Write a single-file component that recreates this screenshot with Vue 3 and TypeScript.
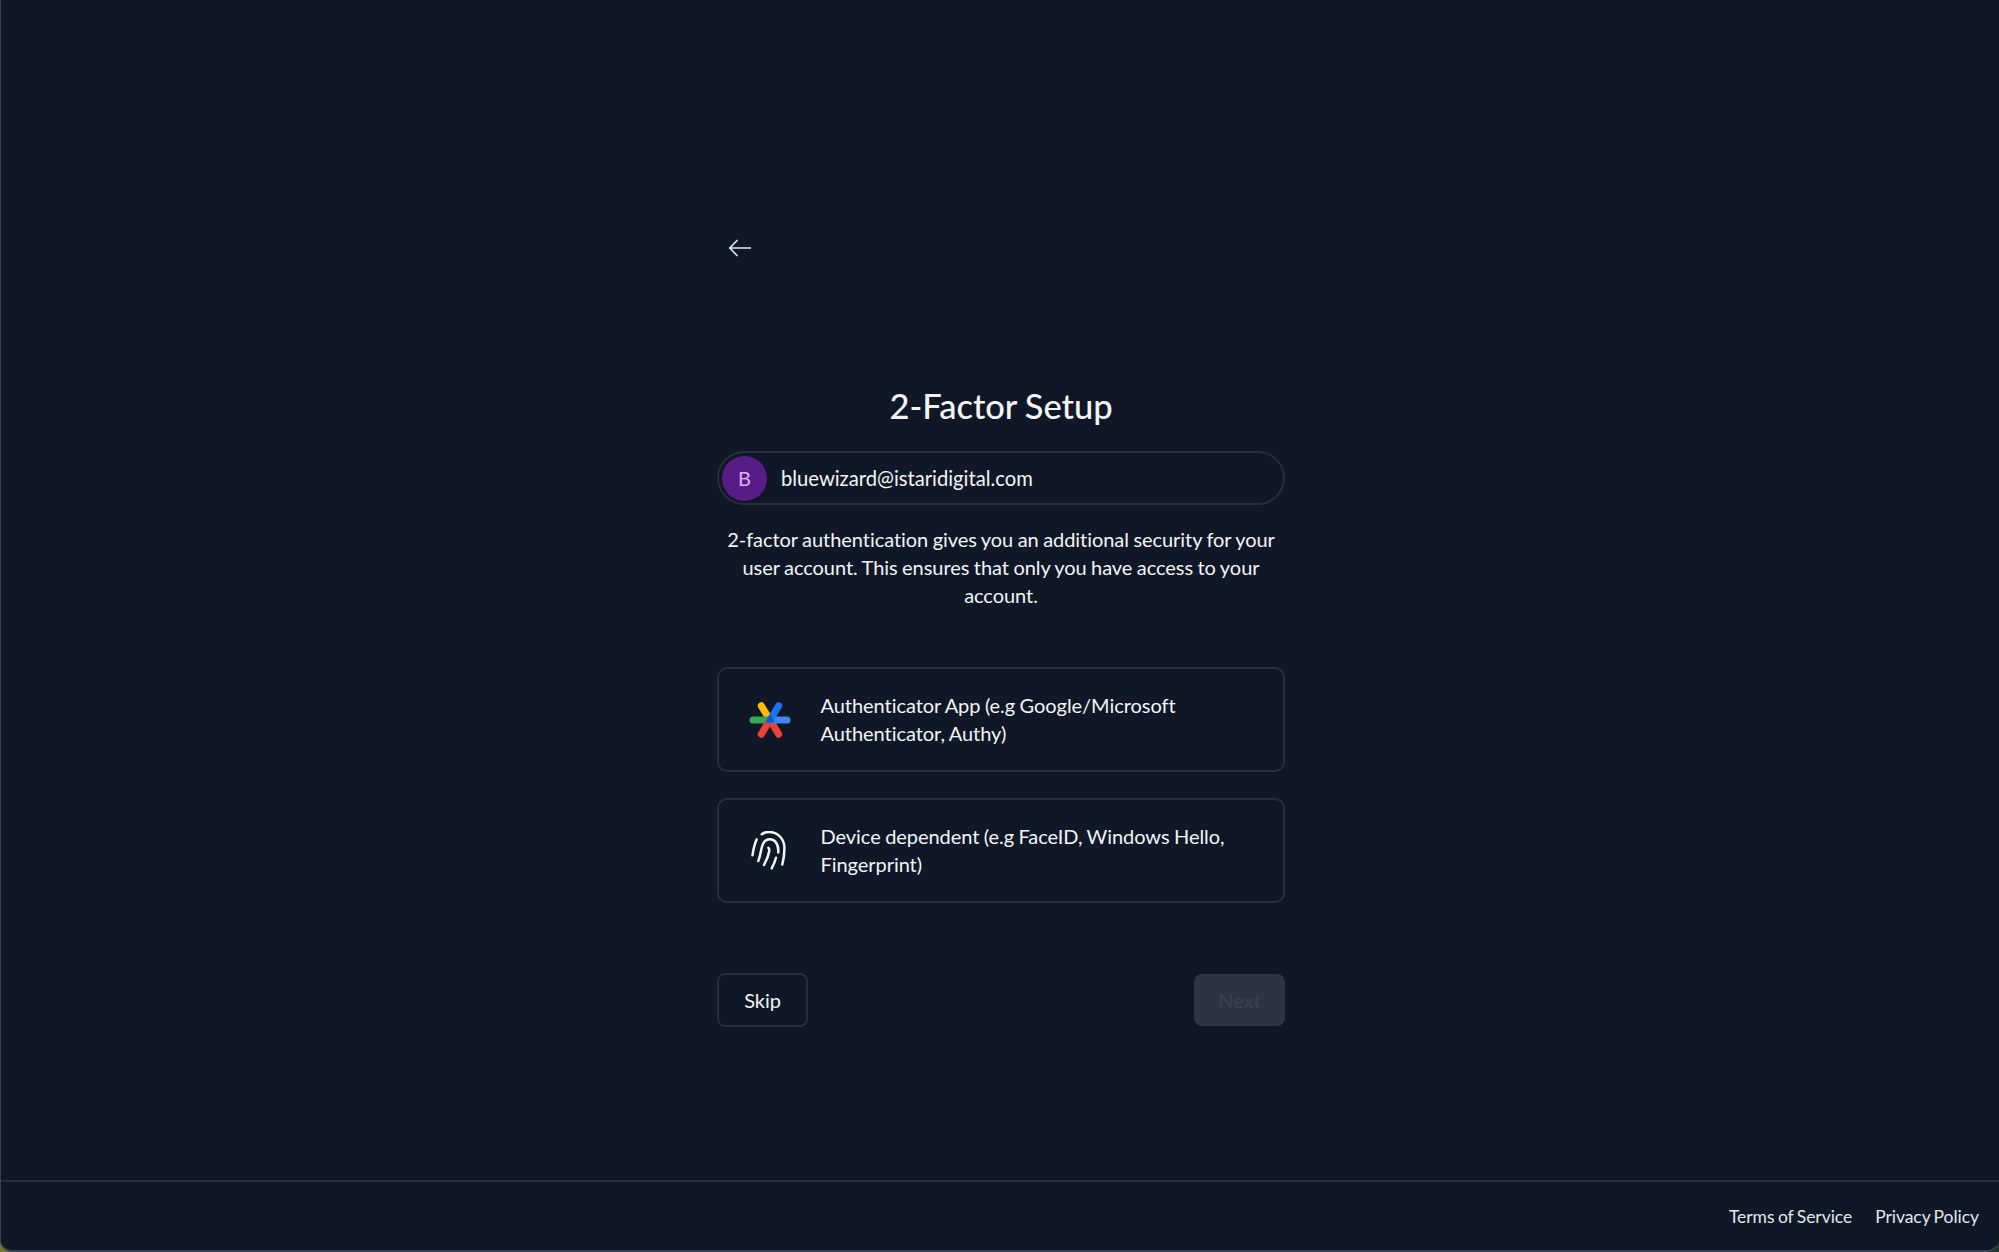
<script setup lang="ts">
const options = [
  { id: 'app', label: 'Authenticator App (e.g Google/Microsoft Authenticator, Authy)' },
  { id: 'device', label: 'Device dependent (e.g FaceID, Windows Hello, Fingerprint)' },
]
</script>

<template>
  <div class="frame">
    <main class="page">
      <div class="column">
        <button class="back" type="button" aria-label="Back">
          <svg width="24" height="20" viewBox="0 0 24 20" fill="none" stroke="#e5e7eb" stroke-width="1.6">
            <path d="M23 10H2M9.5 2 1.8 10l7.700 8" />
          </svg>
        </button>

        <h1>2-Factor Setup</h1>

        <div class="user">
          <span class="avatar">B</span>
          <span class="email">bluewizard@istaridigital.com</span>
        </div>

        <p class="intro">
          2-factor authentication gives you an additional security for your user account. This ensures that only you
          have access to your account.
        </p>

        <div class="options">
          <button v-for="opt in options" :key="opt.id" class="option" type="button">
            <span class="icon">
              <svg v-if="opt.id === 'app'" width="42" height="40" viewBox="0 0 42 40" fill="none" stroke-width="7" stroke-linecap="round">
                <path d="M12.300 5.800 21 20" stroke="#fbbc04" />
                <path d="M4 20h17" stroke="#34a853" />
                <path d="M12.300 34.200 21 20" stroke="#ea4335" />
                <path d="M29.700 34.200 21 20" stroke="#ea4335" />
                <path d="M21 20h17" stroke="#4285f4" />
                <path d="M29.700 5.800 21 20" stroke="#1a73e8" />
                <path d="M21 14.500 16.200 22.500h9.600z" fill="#185abc" stroke="none" />
              </svg>
              <svg v-else width="40" height="40" viewBox="0 0 40 40" fill="none" stroke="#f3f4f6" stroke-width="2.500" stroke-linecap="round">
                <path d="M11.700 3.300C14 1.600 17 .8 20 1c8.500.6 14.300 7.500 14.400 15.500.1 6-.5 11-2.100 17" />
                <path d="M6.700 8.300C4.600 13 3.300 18.500 2.500 24.300" />
                <path d="M8.300 30c1.700-4.300 2.300-8.500 3.400-13.300C13 11 16 8.300 20 8.300c5 0 8.300 5 8.300 11 0 .8 0 1.500-.1 2.200" />
                <path d="M14 34c2.800-5 4.600-10 5.300-14 .3-1.500-.2-2.600-1-3.300" />
                <path d="M21.700 37.300c1.800-3.300 3.300-6.800 4.300-10.600" />
              </svg>
            </span>
            <span class="label">{{ opt.label }}</span>
          </button>
        </div>

        <div class="actions">
          <button class="skip" type="button">Skip</button>
          <button class="next" type="button" disabled>Next</button>
        </div>
      </div>
    </main>

    <footer class="footer">
      <a href="#">Terms of Service</a>
      <a href="#">Privacy Policy</a>
    </footer>
  </div>
</template>

<style scoped>
.frame {
  box-sizing: border-box;
  display: flex;
  flex-direction: column;
  height: 1252px;
  border-left: 1px solid #374151;
  border-bottom: 2px solid #374151;
  border-bottom-left-radius: 12px;
  border-bottom-right-radius: 12px;
  background: #101828;
  color: #f3f4f6;
  font-family: Lato, 'Liberation Sans', sans-serif;
  word-spacing: -0.6px;
  letter-spacing: -0.05px;
}

.page {
  flex: 1;
  display: flex;
  justify-content: center;
  padding-left: 2px;
}

.column {
  width: 568px;
  padding-top: 233px;
}

button {
  font-family: inherit;
  word-spacing: inherit;
  letter-spacing: inherit;
}

.back {
  display: block;
  width: 34px;
  height: 32px;
  margin-left: 6px;
  padding: 0;
  border: 0;
  background: none;
  cursor: pointer;
}

h1 {
  margin: 119px 0 0;
  font-size: 34.500px;
  line-height: 44px;
  font-weight: 500;
  text-align: center;
  color: #f3f4f6;
}

.user {
  display: flex;
  align-items: center;
  gap: 14px;
  height: 54px;
  margin-top: 23px;
  padding-left: 3px;
  box-sizing: border-box;
  border: 2px solid #272e3c;
  border-radius: 27px;
}

.avatar {
  display: flex;
  align-items: center;
  justify-content: center;
  width: 45px;
  height: 45px;
  border-radius: 50%;
  background: #581c87;
  color: #d8b4fe;
  font-size: 20px;
}

.email {
  font-size: 20.200px;
  letter-spacing: 0;
  color: #f3f4f6;
}

.intro {
  margin: 20px 0 0;
  font-size: 20px;
  line-height: 28px;
  text-align: center;
  color: #f3f4f6;
}

.options {
  display: flex;
  flex-direction: column;
  gap: 26px;
  margin-top: 58px;
}

.option {
  display: flex;
  align-items: center;
  gap: 29.500px;
  height: 105px;
  padding: 0 29px;
  box-sizing: border-box;
  border: 2px solid #272e3c;
  border-radius: 10px;
  background: #101828;
  color: #f3f4f6;
  text-align: left;
  cursor: pointer;
}

.icon {
  display: flex;
  flex: none;
  justify-content: center;
  width: 43px;
}

.label {
  font-size: 20px;
  line-height: 28px;
  transform: translateY(-1px);
}

.actions {
  display: flex;
  align-items: center;
  justify-content: space-between;
  margin-top: 70px;
}

.skip {
  width: 91px;
  height: 54px;
  border: 2px solid #272e3c;
  border-radius: 8px;
  background: none;
  color: #f3f4f6;
  font-size: 20px;
  cursor: pointer;
}

.next {
  width: 91px;
  height: 52px;
  border: 0;
  border-radius: 8px;
  background: #2d3441;
  color: #374151;
  font-size: 20px;
}

.footer {
  display: flex;
  justify-content: flex-end;
  align-items: center;
  gap: 23px;
  height: 70px;
  padding: 0 20px 0 0;
  box-sizing: border-box;
  border-top: 2px solid #272e3c;
  font-size: 17.500px;
  word-spacing: -1px;
}

.footer a {
  color: #e5e7eb;
  text-decoration: none;
}
</style>

<style>
html,
body {
  background: linear-gradient(to right, #77772a 0 20px, #1d3a2c 20px);
}
</style>
